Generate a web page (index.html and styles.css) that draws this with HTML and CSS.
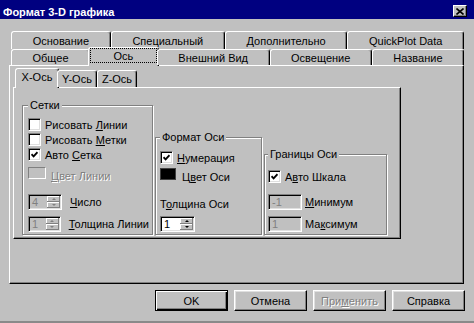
FILE: index.html
```html
<!DOCTYPE html>
<html lang="ru">
<head>
  <meta charset="UTF-8">
  <meta name="viewport" content="width=device-width, initial-scale=1.0">
  <title>Формат 3-D графика</title>
  <link rel="stylesheet" href="styles.css">
</head>
<body>
  <div class="window">
    <div class="titlebar">
      <span class="title">Формат 3-D графика</span>
      <button class="close-btn" title="Закрыть">
        <svg width="8" height="7" viewBox="0 0 8 7"><path d="M0.5 0.5L7.5 6.5M7.5 0.5L0.5 6.5" stroke="#000" stroke-width="1.6"/></svg>
      </button>
    </div>

    <div class="dialog">
      <!-- Back row of tabs -->
      <div class="tab-row back">
        <div class="tab">Основание</div>
        <div class="tab">Специальный</div>
        <div class="tab">Дополнительно</div>
        <div class="tab">QuickPlot Data</div>
      </div>
      <!-- Front row holds the selected tab -->
      <div class="tab-row front">
        <div class="tab">Общее</div>
        <div class="tab active"><span class="focus">Ось</span></div>
        <div class="tab">Внешний Вид</div>
        <div class="tab">Освещение</div>
        <div class="tab">Название</div>
      </div>

      <div class="panel">
        <div class="subtab-row">
          <div class="subtab active">X-Ось</div>
          <div class="subtab">Y-Ось</div>
          <div class="subtab">Z-Ось</div>
        </div>

        <div class="subpanel">
          <!-- Grid lines -->
          <fieldset class="group grid-group">
            <legend>Сетки</legend>
            <div class="check first"><span class="box"></span><span>Рисовать <u>Л</u>инии</span></div>
            <div class="check"><span class="box"></span><span>Рисовать <u>М</u>етки</span></div>
            <div class="check"><span class="box"><svg width="7" height="7" viewBox="0 0 7 7"><path d="M0.5 3.2L2.6 5.3L6.5 1.2" fill="none" stroke="#000" stroke-width="1.9"/></svg></span><span>Авто <u>С</u>етка</span></div>
            <div class="color-row grid-color">
              <span class="swatch off"></span>
              <span class="color-label disabled"><u>Ц</u>вет Линии</span>
            </div>
            <div class="spin-row first">
              <div class="spin off"><span class="spin-value">4</span><span class="spin-btns"><span class="arrow up"></span><span class="arrow down"></span></span></div>
              <span><u>Ч</u>исло</span>
            </div>
            <div class="spin-row">
              <div class="spin off"><span class="spin-value">1</span><span class="spin-btns"><span class="arrow up"></span><span class="arrow down"></span></span></div>
              <span><u>Т</u>олщина Линии</span>
            </div>
          </fieldset>

          <!-- Axis format -->
          <fieldset class="group format-group">
            <legend>Формат Оси</legend>
            <div class="check first"><span class="box"><svg width="7" height="7" viewBox="0 0 7 7"><path d="M0.5 3.2L2.6 5.3L6.5 1.2" fill="none" stroke="#000" stroke-width="1.9"/></svg></span><span><u>Н</u>умерация</span></div>
            <div class="color-row axis-color">
              <span class="swatch black"></span>
              <span class="color-label">Ц<u>в</u>ет Оси</span>
            </div>
            <div class="field-title">Т<u>о</u>лщина Оси</div>
            <div class="spin"><span class="spin-value">1</span><span class="spin-btns"><span class="arrow up"></span><span class="arrow down"></span></span></div>
          </fieldset>

          <!-- Axis bounds -->
          <fieldset class="group bounds-group">
            <legend>Границы Оси</legend>
            <div class="check first"><span class="box"><svg width="7" height="7" viewBox="0 0 7 7"><path d="M0.5 3.2L2.6 5.3L6.5 1.2" fill="none" stroke="#000" stroke-width="1.9"/></svg></span><span>А<u>в</u>то Шкала</span></div>
            <div class="field-row first">
              <span class="field off">-1</span>
              <span><u>М</u>инимум</span>
            </div>
            <div class="field-row">
              <span class="field off">1</span>
              <span>Ма<u>к</u>симум</span>
            </div>
          </fieldset>
        </div>
      </div>

      <div class="buttons">
        <button class="btn default">OK</button>
        <button class="btn">Отмена</button>
        <button class="btn disabled">При<u>м</u>енить</button>
        <button class="btn">Справка</button>
      </div>
    </div>
  </div>
</body>
</html>
```

FILE: styles.css
```css
/* Win95 style dialog */
body {
  margin: 0;
  font-family: "Liberation Sans", Arial, sans-serif;
  font-size: 11px;
  color: #000;
  background: #c0c0c0;
}
u {
  text-underline-offset: 1px;
}
.window {
  width: 474px;
  height: 323px;
  box-sizing: border-box;
  background: #c0c0c0;
  border-bottom: 2px solid #8a8a8a;
}
.titlebar {
  height: 19px;
  background: #000080;
  color: #fff;
  display: flex;
  justify-content: space-between;
  align-items: center;
  padding: 0 7px 0 3px;
}
.title {
  font-weight: bold;
  padding-top: 4px;
}
.close-btn {
  width: 14px;
  height: 12px;
  padding: 0;
  box-sizing: border-box;
  background: #c0c0c0;
  border: 1px solid;
  border-color: #fff #000 #000 #fff;
  box-shadow: inset -1px -1px 0 #808080;
  display: flex;
  align-items: center;
  justify-content: center;
  align-self: flex-end;
  margin-bottom: 2px;
}
.dialog {
  padding: 12px 10px 0 9px;
}

/* Tabs */
.tab-row {
  display: flex;
  margin-left: 2px;
}
.tab, .subtab {
  box-sizing: border-box;
  background: #c0c0c0;
  border: 1px solid;
  border-bottom: 0;
  border-color: #fff #000 transparent #fff;
  border-radius: 3px 3px 0 0;
  box-shadow: inset -1px 0 0 #808080;
  display: flex;
  align-items: center;
  justify-content: center;
  white-space: nowrap;
}
.tab {
  flex: 1 1 auto;
  height: 18px;
  padding: 0 4px;
}
.tab-row.front {
  margin-top: -2px;
  position: relative;
  z-index: 1;
  align-items: flex-start;
}
.tab-row.front .tab {
  height: 16px;
  margin-top: 2px;
}
.tab-row.front .tab.active {
  height: 19px;
  margin: 0 -2px;
  padding: 0 1px 3px;
  align-items: stretch;
}
.focus {
  flex: 1;
  padding: 0 6px;
  border: 1px dotted #000;
  display: flex;
  align-items: center;
  justify-content: center;
}
.panel {
  margin-top: -1px;
  border: 1px solid;
  border-color: #fff #000 #000 #fff;
  box-shadow: inset -1px -1px 0 #808080;
  padding: 2px 0 44px 3px;
}
.subtab-row {
  display: flex;
  align-items: flex-start;
  margin-left: 4px;
  position: relative;
  z-index: 1;
}
.subtab {
  flex: none;
  width: 40px;
  height: 17px;
  margin-top: 2px;
}
.subtab.active {
  width: 44px;
  height: 20px;
  margin: 0 -2px;
  padding-bottom: 3px;
}
.subpanel {
  margin-top: -1px;
  width: 388px;
  height: 152px;
  box-sizing: border-box;
  border: 1px solid;
  border-color: #fff #000 #000 #fff;
  box-shadow: inset -1px -1px 0 #808080;
  display: flex;
  align-items: flex-end;
  gap: 2px;
  padding: 0 0 3px 8px;
}

/* Group boxes */
.group {
  margin: 0;
  min-width: 0;
  box-sizing: border-box;
  border: 1px solid #808080;
  box-shadow: inset 1px 1px 0 #fff, 1px 1px 0 #fff;
  padding: 0 3px 2px 4px;
}
.group legend {
  padding: 0 2px;
  line-height: 13px;
  background: #c0c0c0;
}
.grid-group {
  width: 131px;
  padding-left: 5px;
}
.format-group {
  width: 107px;
}
.bounds-group {
  width: 123px;
  padding-left: 3px;
}
.check {
  display: flex;
  align-items: center;
  gap: 4px;
  height: 15px;
  white-space: nowrap;
}
.grid-group .check.first {
  margin-top: 5px;
}
.format-group .check.first {
  margin-top: 6px;
}
.bounds-group .check.first {
  margin-top: 8px;
}
.box {
  width: 13px;
  height: 13px;
  flex: none;
  box-sizing: border-box;
  background: #fff;
  border: 1px solid;
  border-color: #808080 #fff #fff #808080;
  box-shadow: inset 1px 1px 0 #000, inset -1px -1px 0 #dfdfdf;
  display: flex;
  align-items: center;
  justify-content: center;
}
.color-row {
  display: flex;
  align-items: flex-start;
  height: 16px;
  white-space: nowrap;
}
.grid-color {
  margin-top: 3px;
  gap: 5px;
}
.axis-color {
  margin-top: 1px;
  gap: 6px;
}
.swatch {
  height: 12px;
  margin-top: 2px;
  box-sizing: border-box;
}
.swatch.off {
  width: 18px;
  border: 1px solid;
  border-color: #808080 #fff #fff #808080;
  background: #c0c0c0;
}
.swatch.black {
  width: 16px;
  background: #000;
  border: 1px solid #404040;
}
.color-label {
  padding-top: 5px;
  line-height: 13px;
}
.disabled {
  color: #808080;
  text-shadow: 1px 1px 0 #fff;
}
.field-title {
  margin-top: 16px;
  line-height: 13px;
  white-space: nowrap;
}
.format-group .spin {
  margin-top: 5px;
  width: 35px;
}

/* Spin boxes and edit fields */
.spin-row, .field-row {
  display: flex;
  align-items: center;
  white-space: nowrap;
}
.spin-row {
  gap: 8px;
  margin-top: 6px;
}
.spin-row.first {
  margin-top: 13px;
}
.field-row {
  gap: 3px;
  margin-top: 6px;
}
.field-row.first {
  margin-top: 10px;
}
.spin, .field {
  width: 34px;
  height: 16px;
  box-sizing: border-box;
  border: 1px solid;
  border-color: #808080 #fff #fff #808080;
  box-shadow: inset 1px 1px 0 #000, inset -1px -1px 0 #dfdfdf;
  background: #fff;
}
.spin {
  display: flex;
}
.spin-value, .field {
  padding-left: 3px;
  line-height: 14px;
}
.spin-value {
  flex: 1;
}
.spin.off, .field.off {
  background: #c0c0c0;
  color: #808080;
}
.field {
  display: block;
}
.spin-btns {
  width: 13px;
  margin: 1px 1px 1px 0;
  display: flex;
  flex-direction: column;
}
.arrow {
  flex: 1;
  background: #c0c0c0;
  box-shadow: inset -1px -1px 0 #808080, inset 1px 1px 0 #fff;
  display: flex;
  align-items: center;
  justify-content: center;
}
.arrow::after {
  content: "";
  border-left: 2px solid transparent;
  border-right: 2px solid transparent;
}
.arrow.up::after {
  border-bottom: 2px solid #000;
}
.arrow.down::after {
  border-top: 2px solid #000;
}
.spin.off .arrow.up::after {
  border-bottom-color: #808080;
}
.spin.off .arrow.down::after {
  border-top-color: #808080;
}

/* Bottom buttons */
.buttons {
  display: flex;
  justify-content: flex-end;
  gap: 6px;
  margin: 6px -1px 0 0;
}
.btn {
  width: 73px;
  height: 21px;
  padding: 0;
  font: inherit;
  color: #000;
  background: #c0c0c0;
  border: 1px solid;
  border-color: #fff #000 #000 #fff;
  box-shadow: inset -1px -1px 0 #808080, inset 1px 1px 0 #dfdfdf;
}
.btn.default {
  border-color: #000;
  box-shadow: inset 1px 1px 0 #fff, inset -1px -1px 0 #000, inset -2px -2px 0 #808080;
}
.btn.disabled {
  color: #808080;
  text-shadow: 1px 1px 0 #fff;
}
```
